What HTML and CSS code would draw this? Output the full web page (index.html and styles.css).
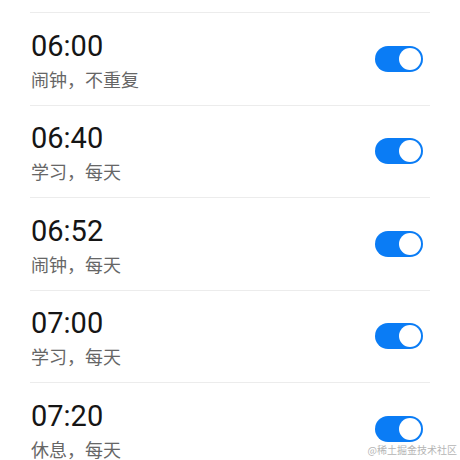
FILE: index.html
```html
<!DOCTYPE html>
<html lang="zh-CN">
<head>
    <meta charset="UTF-8">
    <meta name="viewport" content="width=device-width, initial-scale=1.0">
    <title>闹钟</title>
    <link rel="stylesheet" href="styles.css">
</head>
<body>
    <div class="alarm-list">
        <div class="alarm">
            <div class="alarm-info">
                <div class="alarm-time">06:00</div>
                <div class="alarm-desc">闹钟，不重复</div>
            </div>
            <span class="switch on"><span class="knob"></span></span>
        </div>
        <div class="alarm">
            <div class="alarm-info">
                <div class="alarm-time">06:40</div>
                <div class="alarm-desc">学习，每天</div>
            </div>
            <span class="switch on"><span class="knob"></span></span>
        </div>
        <div class="alarm">
            <div class="alarm-info">
                <div class="alarm-time">06:52</div>
                <div class="alarm-desc">闹钟，每天</div>
            </div>
            <span class="switch on"><span class="knob"></span></span>
        </div>
        <div class="alarm">
            <div class="alarm-info">
                <div class="alarm-time">07:00</div>
                <div class="alarm-desc">学习，每天</div>
            </div>
            <span class="switch on"><span class="knob"></span></span>
        </div>
        <div class="alarm">
            <div class="alarm-info">
                <div class="alarm-time">07:20</div>
                <div class="alarm-desc">休息，每天</div>
            </div>
            <span class="switch on"><span class="knob"></span></span>
        </div>
    </div>
    <div class="watermark">@稀土掘金技术社区</div>
</body>
</html>
```

FILE: styles.css
```css
html, body {
    height: 100%;
}
body {
    margin: 0;
    overflow: hidden;
    background-color: #fff;
    font-family: Roboto, "Noto Sans CJK SC", sans-serif;
}
.alarm-list {
    padding: 12px 30px 0;
}
.alarm {
    display: flex;
    align-items: center;
    justify-content: space-between;
    height: 91.5px;
    border-top: 1px solid #ececec;
    box-sizing: content-box;
}
.alarm-info {
    padding-left: 1px;
    padding-top: 2px;
}
.alarm-time {
    font-size: 29px;
    line-height: 34px;
    color: #151515;
}
.alarm-desc {
    margin-top: 5px;
    font-family: "Noto Sans CJK SC", sans-serif;
    font-size: 18px;
    line-height: 23px;
    color: #666;
}
.switch {
    display: flex;
    align-items: center;
    justify-content: flex-end;
    width: 48px;
    height: 26px;
    padding: 0 2px;
    margin-right: 7px;
    box-sizing: border-box;
    border-radius: 13px;
    background-color: #0a7cf5;
}
.knob {
    width: 22px;
    height: 22px;
    border-radius: 50%;
    background-color: #fff;
}
.watermark {
    position: absolute;
    right: 3px;
    bottom: 3px;
    font-family: "Noto Sans CJK SC", sans-serif;
    font-size: 10px;
    color: #b5b5b5;
}
```
